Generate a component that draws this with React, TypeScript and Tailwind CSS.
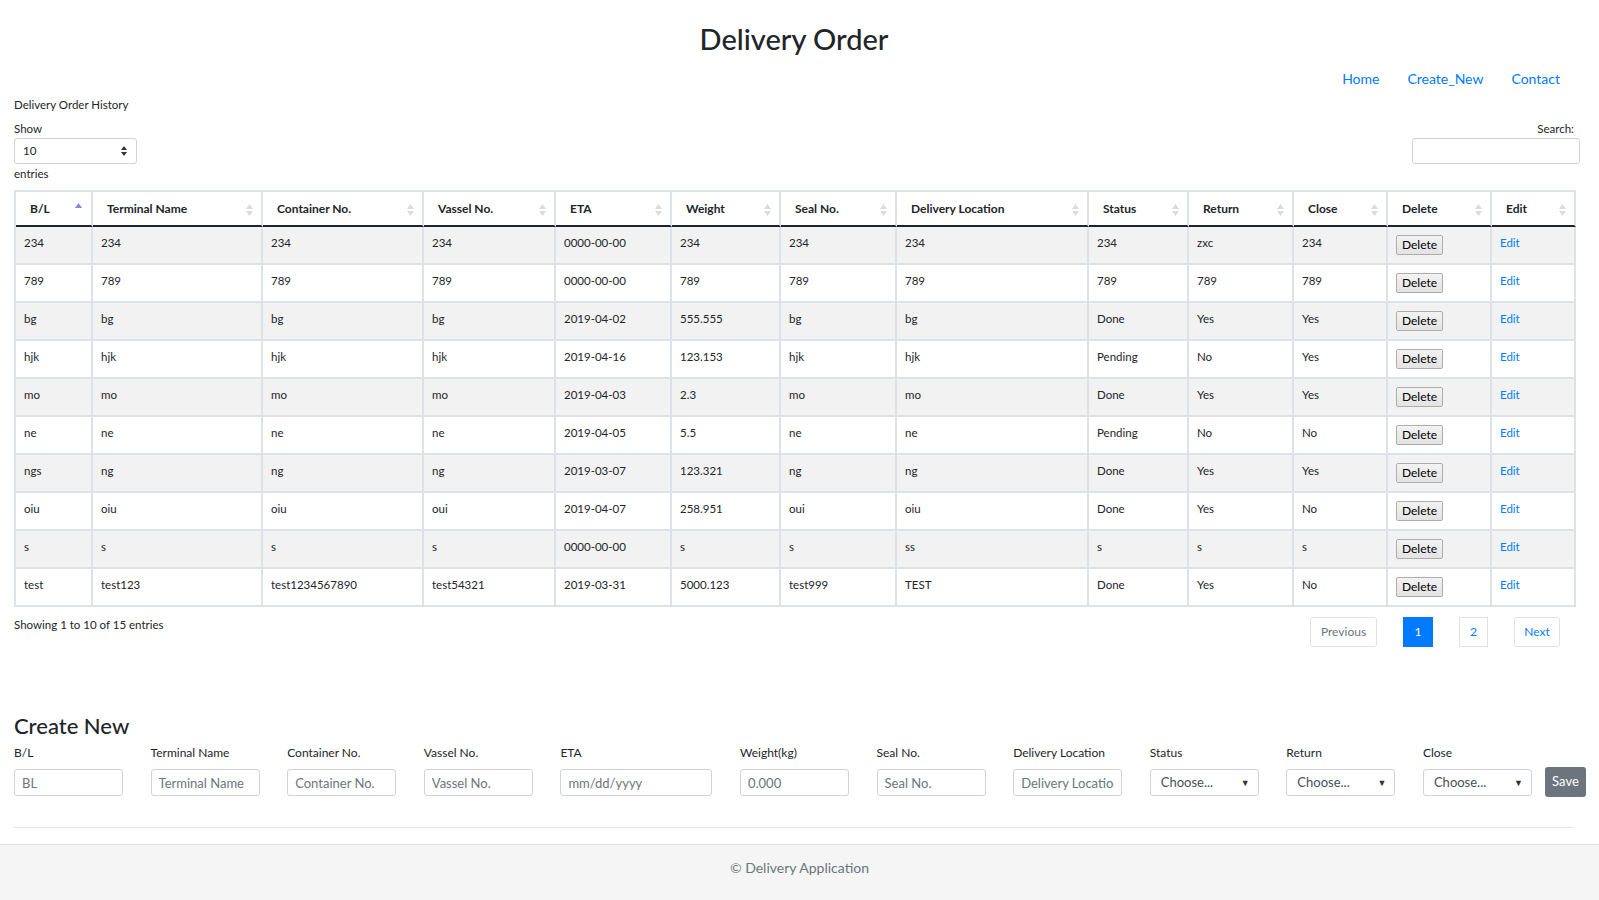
import React from 'react';

type Row = string[];

const columns = [
  { name: 'B/L', w: 'w-[77px]' },
  { name: 'Terminal Name', w: 'w-[170px]' },
  { name: 'Container No.', w: 'w-[161px]' },
  { name: 'Vassel No.', w: 'w-[132px]' },
  { name: 'ETA', w: 'w-[116px]' },
  { name: 'Weight', w: 'w-[109px]' },
  { name: 'Seal No.', w: 'w-[116px]' },
  { name: 'Delivery Location', w: 'w-[192px]' },
  { name: 'Status', w: 'w-[100px]' },
  { name: 'Return', w: 'w-[105px]' },
  { name: 'Close', w: 'w-[94px]' },
  { name: 'Delete', w: 'w-[104px]' },
  { name: 'Edit', w: 'w-[84px]' },
];

const rows: Row[] = [
  ['234', '234', '234', '234', '0000-00-00', '234', '234', '234', '234', 'zxc', '234'],
  ['789', '789', '789', '789', '0000-00-00', '789', '789', '789', '789', '789', '789'],
  ['bg', 'bg', 'bg', 'bg', '2019-04-02', '555.555', 'bg', 'bg', 'Done', 'Yes', 'Yes'],
  ['hjk', 'hjk', 'hjk', 'hjk', '2019-04-16', '123.153', 'hjk', 'hjk', 'Pending', 'No', 'Yes'],
  ['mo', 'mo', 'mo', 'mo', '2019-04-03', '2.3', 'mo', 'mo', 'Done', 'Yes', 'Yes'],
  ['ne', 'ne', 'ne', 'ne', '2019-04-05', '5.5', 'ne', 'ne', 'Pending', 'No', 'No'],
  ['ngs', 'ng', 'ng', 'ng', '2019-03-07', '123.321', 'ng', 'ng', 'Done', 'Yes', 'Yes'],
  ['oiu', 'oiu', 'oiu', 'oui', '2019-04-07', '258.951', 'oui', 'oiu', 'Done', 'Yes', 'No'],
  ['s', 's', 's', 's', '0000-00-00', 's', 's', 'ss', 's', 's', 's'],
  ['test', 'test123', 'test1234567890', 'test54321', '2019-03-31', '5000.123', 'test999', 'TEST', 'Done', 'Yes', 'No'],
];

// little up/down triangles DataTables puts in the header
function SortIcon({ active }: { active?: boolean }) {
  if (active) {
    return (
      <svg width="7" height="12" viewBox="0 0 7 12" className="absolute right-[9px] top-[11px]">
        <path d="M3.5 0 L7 5 L0 5 Z" fill="#8585e0" />
      </svg>
    );
  }
  return (
    <svg width="7" height="12" viewBox="0 0 7 12" className="absolute right-[8px] top-[12px]">
      <path d="M3.5 0 L7 5 L0 5 Z" fill="#dcdcdc" />
      <path d="M0 7 L7 7 L3.5 12 Z" fill="#dcdcdc" />
    </svg>
  );
}

function Field({ label, placeholder, wide }: { label: string; placeholder: string; wide?: boolean }) {
  return (
    <div className="flex flex-col shrink-0">
      <label className="text-[12px] leading-[18px] text-[#212529]">{label}</label>
      <input
        placeholder={placeholder}
        className={`mt-[7px] h-[27px] ${wide ? 'w-[152px]' : 'w-[109px]'} border border-[#ced4da] rounded-[3px] px-[7px] text-[13px] text-[#495057] placeholder:text-[#6c757d] outline-none`}
      />
    </div>
  );
}

function Choose({ label }: { label: string }) {
  return (
    <div className="flex flex-col shrink-0">
      <label className="text-[12px] leading-[18px] text-[#212529]">{label}</label>
      <div className="mt-[7px] h-[27px] w-[109px] border border-[#ced4da] rounded-[3px] pl-[10px] pr-[8px] flex items-center justify-between text-[13px] text-[#495057]">
        <span>Choose...</span>
        <span className="text-[9px] text-[#333]">▼</span>
      </div>
    </div>
  );
}

export default function App() {
  return (
    <div className="min-h-[900px] flex flex-col bg-white text-[#212529] font-['Lato',sans-serif]">
      <div className="pl-[14px] pr-[25px] flex-1">
        {/* Header */}
        <h2 className="pt-[19px] text-center text-[29px] leading-[40px] font-medium">Delivery Order</h2>
        <nav className="mt-[10px] flex justify-end text-[14px] leading-[20px] text-[#007bff]">
          <a className="px-[14px]">Home</a>
          <a className="px-[14px]">Create_New</a>
          <a className="pl-[14px] pr-[14px]">Contact</a>
        </nav>

        {/* Delivery order history */}
        <div className="mt-[7px] text-[11.5px] leading-[18px]">Delivery Order History</div>
        <div className="mt-[6px] flex justify-between">
          <div className="text-[11.5px] leading-[18px]">
            <div>Show</div>
            <div className="h-[26px] w-[123px] border border-[#ced4da] rounded-[3px] pl-[8px] pr-[9px] flex items-center justify-between">
              <span>10</span>
              <svg width="6" height="10" viewBox="0 0 6 10">
                <path d="M3 0 L6 4 L0 4 Z" fill="#333" />
                <path d="M0 6 L6 6 L3 10 Z" fill="#333" />
              </svg>
            </div>
            <div className="mt-[1px]">entries</div>
          </div>
          <div className="text-[11.5px] leading-[18px] flex flex-col items-end -mr-[6px]">
            <div className="pr-[6px]">Search:</div>
            <input className="h-[26px] w-[168px] border border-[#ced4da] rounded-[3px] outline-none" />
          </div>
        </div>

        <table className="mt-[7px] w-[1560px] table-fixed border-separate border-spacing-0 border-l-2 border-t-2 border-[#dee2e6] text-[11.5px]">
          <thead>
            <tr>
              {columns.map((c, i) => (
                <th
                  key={c.name}
                  className={`${c.w} relative h-[35px] text-left font-bold text-[12px] pl-[14px] border-r-2 border-b-2 border-r-[#dee2e6] border-b-[#212529] leading-[18px]`}
                >
                  {c.name}
                  <SortIcon active={i === 0} />
                </th>
              ))}
            </tr>
          </thead>
          <tbody>
            {rows.map((r, ri) => (
              <tr key={ri} className={ri % 2 === 0 ? 'bg-[#f2f2f2]' : 'bg-white'}>
                {r.map((v, ci) => (
                  <td key={ci} className="align-top pl-[8px] pt-[7px] pb-[11px] leading-[18px] border-r-2 border-b-2 border-[#dee2e6]">
                    {v}
                  </td>
                ))}
                <td className="align-top pl-[8px] pt-[8px] pb-[8px] border-r-2 border-b-2 border-[#dee2e6]">
                  <button className="h-[20px] w-[47px] border border-[#adadad] rounded-[2px] bg-gradient-to-b from-[#f3f3f3] to-[#e3e3e3] text-[12px] leading-[18px] text-black">
                    Delete
                  </button>
                </td>
                <td className="align-top pl-[8px] pt-[7px] pb-[11px] leading-[18px] border-r-2 border-b-2 border-[#dee2e6]">
                  <a className="text-[#007bff]">Edit</a>
                </td>
              </tr>
            ))}
          </tbody>
        </table>

        {/* Footer of table */}
        <div className="flex justify-between">
          <div className="mt-[9px] text-[11.5px] leading-[18px]">Showing 1 to 10 of 15 entries</div>
          <div className="mt-[10px] mr-[14px] flex gap-[26px] text-[12px]">
            <span className="h-[30px] w-[67px] border border-[#dee2e6] rounded-[3px] flex items-center justify-center text-[#6c757d]">Previous</span>
            <span className="h-[30px] w-[30px] bg-[#007bff] flex items-center justify-center text-white">1</span>
            <span className="h-[30px] w-[29px] border border-[#dee2e6] flex items-center justify-center text-[#007bff]">2</span>
            <span className="h-[30px] w-[46px] border border-[#dee2e6] rounded-[3px] flex items-center justify-center text-[#007bff]">Next</span>
          </div>
        </div>

        {/* Create new form */}
        <h3 className="mt-[64px] text-[22px] leading-[30px] font-medium">Create New</h3>
        <div className="mt-[3px] flex items-end">
          <div className="flex gap-[27.6px] shrink-0">
            <Field label="B/L" placeholder="BL" />
            <Field label="Terminal Name" placeholder="Terminal Name" />
            <Field label="Container No." placeholder="Container No." />
            <Field label="Vassel No." placeholder="Vassel No." />
            <Field label="ETA" placeholder="mm/dd/yyyy" wide />
            <Field label="Weight(kg)" placeholder="0.000" />
            <Field label="Seal No." placeholder="Seal No." />
            <Field label="Delivery Location" placeholder="Delivery Location" />
            <Choose label="Status" />
            <Choose label="Return" />
            <Choose label="Close" />
          </div>
          <button className="shrink-0 ml-[13px] mb-[-1px] h-[30px] w-[41px] rounded-[3px] bg-[#6c757d] text-white text-[13px]">Save</button>
        </div>

        <hr className="mt-[31px] border-t border-[#e5e5e5]" />
      </div>

      <footer className="mt-[16px] h-[57px] border-t border-[#dddddd] bg-[#f5f5f5] pt-[13px] text-center text-[14px] leading-[20px] text-[#6c757d]">
        © Delivery Application
      </footer>
    </div>
  );
}
